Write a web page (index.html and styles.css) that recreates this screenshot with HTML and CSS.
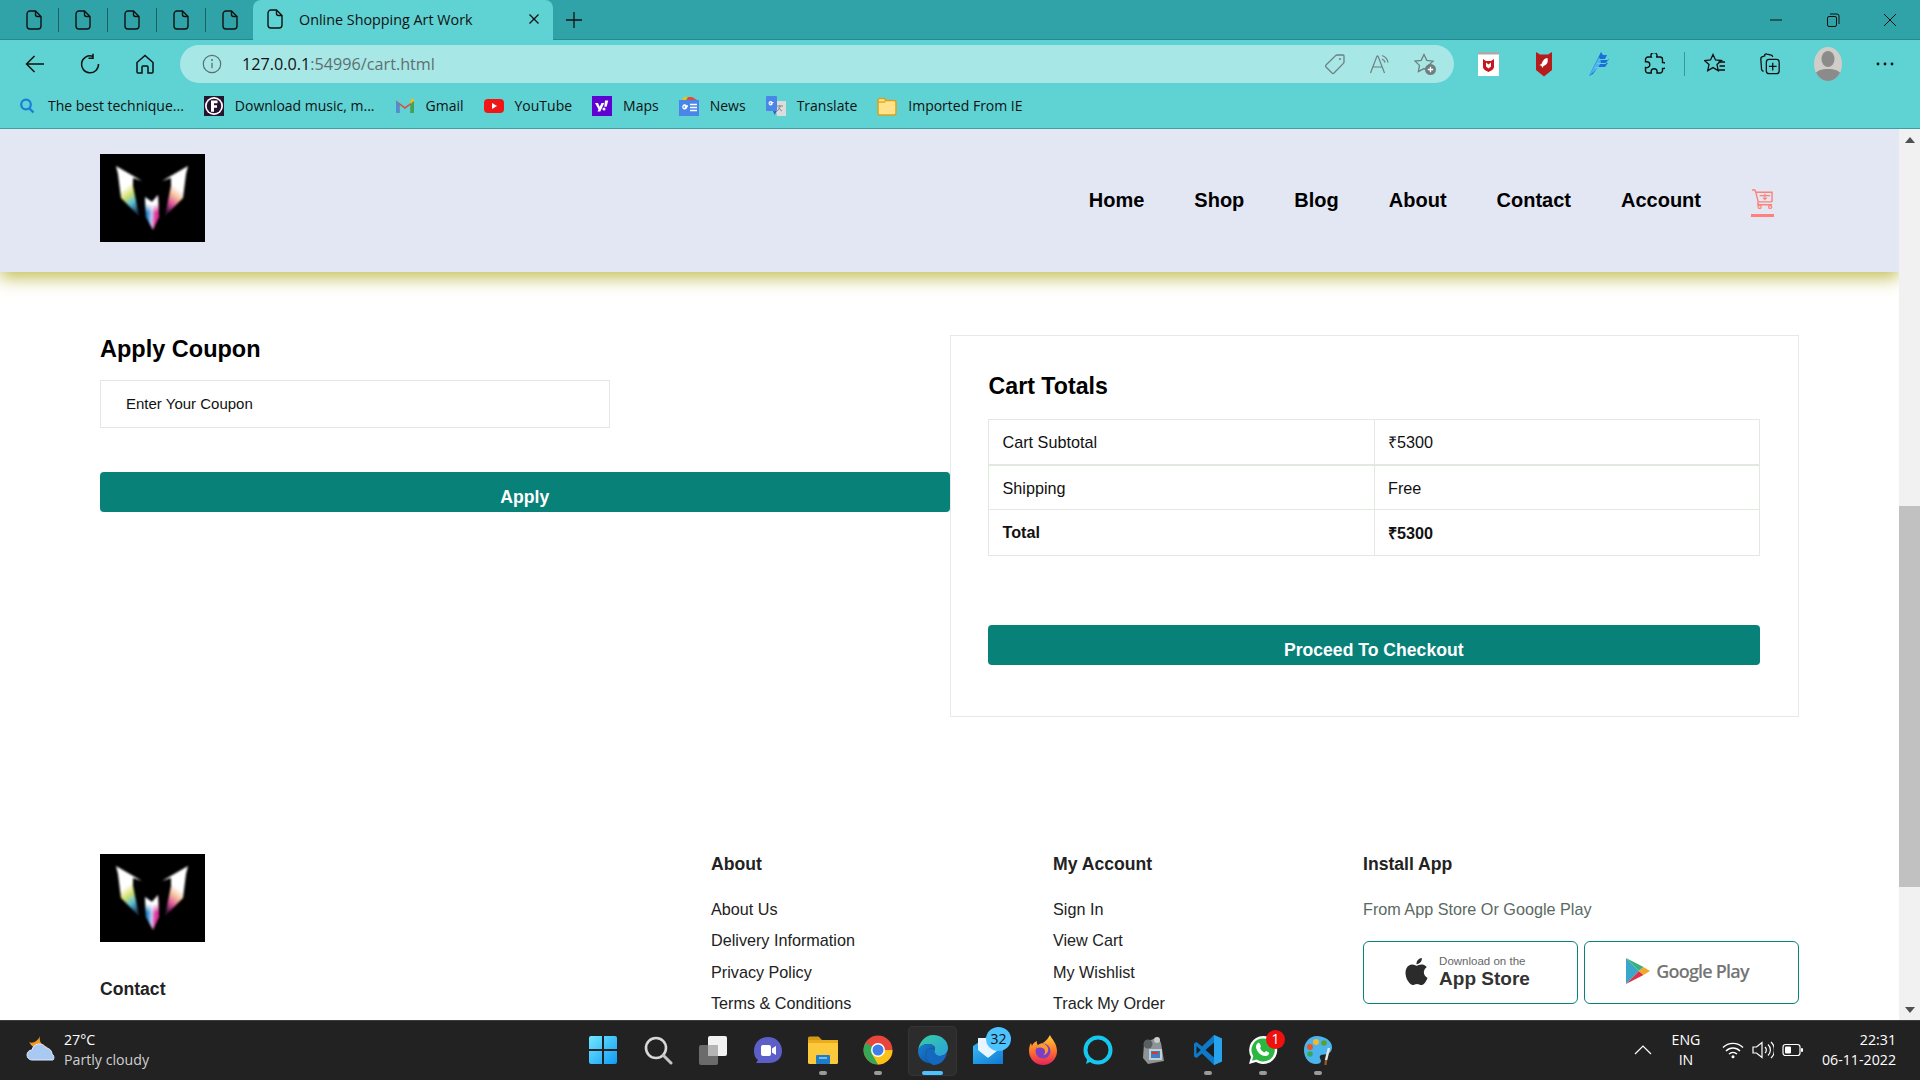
FILE: index.html
```html
<!DOCTYPE html>
<html lang="en">
<head>
<meta charset="utf-8">
<title>Online Shopping Art Work</title>
<link rel="stylesheet" href="styles.css">
</head>
<body>
<svg class="sprite" aria-hidden="true">
  <defs>
    <linearGradient id="wl" x1="0.2" y1="0" x2="0.6" y2="1"><stop offset="0.42" stop-color="#fff"/><stop offset="0.6" stop-color="#d6e06a"/><stop offset="0.78" stop-color="#5ac0d8"/><stop offset="1" stop-color="#1f3a5a"/></linearGradient>
    <linearGradient id="wr" x1="0.8" y1="0" x2="0.4" y2="1"><stop offset="0.45" stop-color="#fff"/><stop offset="0.62" stop-color="#f5c09a"/><stop offset="0.8" stop-color="#e0559a"/><stop offset="1" stop-color="#3a1440"/></linearGradient>
    <linearGradient id="wc" x1="0" y1="0" x2="1" y2="0.1"><stop offset="0.3" stop-color="#2f8fd6"/><stop offset="0.52" stop-color="#c8d0f4"/><stop offset="0.78" stop-color="#e2349a"/></linearGradient>
    <linearGradient id="wc2" x1="0" y1="0" x2="0" y2="1"><stop offset="0.25" stop-color="#fff"/><stop offset="0.5" stop-color="#fff" stop-opacity="0"/></linearGradient>
    <filter id="soft"><feGaussianBlur stdDeviation="0.9"/></filter>
    <linearGradient id="win" x1="0" y1="0" x2="1" y2="1"><stop offset="0" stop-color="#72e8ff"/><stop offset="1" stop-color="#0f9bf5"/></linearGradient>
    <linearGradient id="edge1" x1="0" y1="0" x2="1" y2="1"><stop offset="0" stop-color="#37cfa0"/><stop offset="1" stop-color="#2a9fe0"/></linearGradient>
    <linearGradient id="edge2" x1="0" y1="0" x2="1" y2="1"><stop offset="0" stop-color="#1a82d6"/><stop offset="1" stop-color="#0c4f9e"/></linearGradient>
    <linearGradient id="fx" x1="0" y1="0" x2="0" y2="1"><stop offset="0" stop-color="#ffcf3a"/><stop offset="0.5" stop-color="#ff7a2a"/><stop offset="1" stop-color="#e6205c"/></linearGradient>
    <linearGradient id="mail" x1="0" y1="0" x2="1" y2="1"><stop offset="0" stop-color="#35b8f2"/><stop offset="1" stop-color="#0f78d4"/></linearGradient>
    <symbol id="logo" viewBox="0 0 105 88">
      <rect width="105" height="88" fill="#000"/>
      <g filter="url(#soft)">
        <path d="M16 12 42 27 33 24 33 32 39 62 21 44 18 20Z" fill="url(#wl)"/>
        <path d="M88 12 62 27 71 24 71 32 65 62 83 44 86 20Z" fill="url(#wr)"/>
        <path d="M45 43 52 48 58 41 59 63 53 76 46 63Z" fill="url(#wc)"/>
        <path d="M45 43 52 48 58 41 59 63 53 76 46 63Z" fill="url(#wc2)"/>
      </g>
    </symbol>
    <symbol id="doc" viewBox="0 0 16 20">
      <path d="M4 1h5.500L15 6.500V16a3 3 0 0 1-3 3H4a3 3 0 0 1-3-3V4a3 3 0 0 1 3-3Z M9.500 1v3.500a2 2 0 0 0 2 2H15" fill="none" stroke="#111" stroke-width="1.400"/>
    </symbol>
  </defs>
</svg>

<div class="browser">
  <div class="tabstrip">
    <div class="pin"><svg class="ic-doc"><use href="#doc"/></svg></div>
    <div class="pin"><svg class="ic-doc"><use href="#doc"/></svg></div>
    <div class="pin"><svg class="ic-doc"><use href="#doc"/></svg></div>
    <div class="pin"><svg class="ic-doc"><use href="#doc"/></svg></div>
    <div class="pin pin-last"><svg class="ic-doc"><use href="#doc"/></svg></div>
    <div class="tab">
      <svg class="ic-doc"><use href="#doc"/></svg>
      <span class="tab-title">Online Shopping Art Work</span>
      <svg class="tab-x" viewBox="0 0 12 12"><path d="M1.500 1.500l9 9M10.500 1.500l-9 9" stroke="#111" stroke-width="1.300"/></svg>
    </div>
    <svg class="tab-plus" viewBox="0 0 18 18"><path d="M9 1v16M1 9h16" stroke="#111" stroke-width="1.300"/></svg>
    <div class="winctl">
      <svg viewBox="0 0 14 14"><path d="M1 7h12" stroke="#111" stroke-width="1"/></svg>
      <svg viewBox="0 0 14 14"><path d="M1.500 5a1.500 1.500 0 0 1 1.500-1.500h6A1.500 1.500 0 0 1 10.500 5v7a1.500 1.500 0 0 1-1.500 1.500H3A1.500 1.500 0 0 1 1.500 12Z M4 1h7a2 2 0 0 1 2 2v8" fill="none" stroke="#111" stroke-width="1"/></svg>
      <svg viewBox="0 0 14 14"><path d="M1 1l12 12M13 1 1 13" stroke="#111" stroke-width="1"/></svg>
    </div>
  </div>

  <div class="toolbar">
    <div class="tool"><svg class="i22" viewBox="0 0 22 22"><path d="M20 11H2.500M10.500 3l-8 8 8 8" fill="none" stroke="#111" stroke-width="1.500"/></svg></div>
    <div class="tool"><svg class="i22" viewBox="0 0 22 22"><path d="M13.500 3.200A8.500 8.500 0 1 0 19.500 11M14 .8v4.500H9.500" fill="none" stroke="#111" stroke-width="1.500"/></svg></div>
    <div class="tool"><svg class="i22" viewBox="0 0 22 22"><path d="M3 9.500 11 2.500l8 7V19a1 1 0 0 1-1 1h-4v-6a1 1 0 0 0-1-1H9a1 1 0 0 0-1 1v6H4a1 1 0 0 1-1-1Z" fill="none" stroke="#111" stroke-width="1.500"/></svg></div>
    <div class="addr">
      <svg class="i20" viewBox="0 0 20 20"><circle cx="10" cy="10" r="8.700" fill="none" stroke="#5b6f70" stroke-width="1.200"/><path d="M10 8.800v5.500" stroke="#5b6f70" stroke-width="1.300"/><circle cx="10" cy="6" r="1" fill="#5b6f70"/></svg>
      <span class="url"><span class="url-host">127.0.0.1</span>:54996/cart.html</span>
      <div class="addr-tools">
        <div class="atool"><svg class="i22" viewBox="0 0 22 22"><path d="M13 2h6a1 1 0 0 1 1 1v6a2 2 0 0 1-.6 1.400L10 20a1.500 1.500 0 0 1-2 0L2 14a1.500 1.500 0 0 1 0-2l9.600-9.400A2 2 0 0 1 13 2Z" fill="none" stroke="#6e7f80" stroke-width="1.300"/><circle cx="16" cy="6" r="1" fill="#6e7f80"/></svg></div>
        <div class="atool"><svg class="i22" viewBox="0 0 22 22"><path d="M1.500 20 8 3h1l6.500 17M4 14h9.500" fill="none" stroke="#6e7f80" stroke-width="1.200"/><path d="M13 2.500a9 9 0 0 1 6 7M13 6a5 5 0 0 1 3 3.500" fill="none" stroke="#6e7f80" stroke-width="1.200"/></svg></div>
        <div class="atool"><svg class="i22" viewBox="0 0 22 22"><path d="M10 1.500 12.800 7.300l6.200.8-4.500 4.300 1.100 6.200L10 15.600l-5.600 3 1.100-6.200L1 8.100l6.200-.8Z" fill="none" stroke="#6e7f80" stroke-width="1.300"/><circle cx="16.500" cy="16.500" r="5.500" fill="#6e7f80"/><path d="M16.500 13.800v5.400M13.800 16.500h5.400" stroke="#fff" stroke-width="1.300"/></svg></div>
      </div>
    </div>
    <div class="tool tool-first"><svg class="i-tall" viewBox="0 0 22 26"><rect y="1" width="21" height="24" fill="#fff"/><rect y="1" width="21" height="2.500" fill="#aaa"/><path d="M5 8l3 2h5l3-2v8c0 2-3 4-5.500 5C8 20 5 18 5 16Z" fill="#c8161d"/><path d="M8 11.500v4l2.500 2 2.500-2v-4l-2.500 2Z" fill="#fff"/></svg></div>
    <div class="tool"><svg class="i-tall" viewBox="0 0 22 26"><path d="M3 1l4 2.500h8L19 1v18l-8 6.500L3 19Z" fill="#b71c1c"/><path d="M14.500 7c-3 0-5 3-6 6l-2 1 2 1 1 2 1-2c3-1 5-3 4-8Z" fill="#fff"/></svg></div>
    <div class="tool"><svg class="i-tall" viewBox="0 0 22 26"><path d="M1 25 13 1l2 3h4l-2 4h4l-3 4h2l-3 4h-7l-5 7Z" fill="#1b6fd8"/><path d="M1 25 11 6l2 5-3 6Z" fill="#4fb2ee"/><path d="M11 8.500h9M9 12.500h9M7 16.500h9" stroke="#5fd2d3" stroke-width="1"/></svg></div>
    <div class="tool"><svg class="i22" viewBox="0 0 22 22"><path d="M8 3.500a3 3 0 0 1 6 0c0 .8-.3 1.200-.3 1.500h3.300a2.500 2.500 0 0 1 2.500 2.500v3.100c.4 0 .5-.1.700-.1a3 3 0 0 1 0 6c-.2 0-.3-.1-.7-.1v2.100a2.500 2.500 0 0 1-2.500 2.500h-3.100c0-.5.2-.8.2-1.200a3 3 0 0 0-6 0c0 .4.2.7.2 1.200H5a2.500 2.500 0 0 1-2.500-2.500v-3c.5 0 .9.2 1.300.2a3 3 0 0 0 0-6c-.4 0-.8.2-1.300.2V7.500A2.500 2.500 0 0 1 5 5h3.300C8.200 4.700 8 4.200 8 3.500Z" fill="none" stroke="#111" stroke-width="1.400" transform="translate(0 -1)"/></svg></div>
    <div class="sep"></div>
    <div class="tool"><svg class="i22" viewBox="0 0 22 22"><path d="M9 1.500 11.500 7l6 .6-4.500 4 1.300 6-5.300-3-5.300 3 1.300-6L.5 7.600l6-.6Z" fill="none" stroke="#111" stroke-width="1.300"/><path d="M14.500 9H21M15.500 13H21M14.500 17H21" stroke="#111" stroke-width="1.300"/></svg></div>
    <div class="tool"><svg class="i22" viewBox="0 0 22 24"><path d="M5 2.500a2 2 0 0 1 2.500-1.400l5 1.300a2 2 0 0 1 1.400 2M4 20a3 3 0 0 1-2.200-2L1 7a3 3 0 0 1 2.500-3.300L6 3" fill="none" stroke="#111" stroke-width="1.400"/><rect x="7" y="7" width="14" height="15.500" rx="3" fill="none" stroke="#111" stroke-width="1.400"/><path d="M14 10.500v8.500M9.800 14.700h8.400" stroke="#111" stroke-width="1.400"/></svg></div>
    <div class="tool tool-wide"><div class="avatar"><svg viewBox="0 0 28 34"><ellipse cx="14" cy="12" rx="6.500" ry="8" fill="#8b8b8b"/><path d="M0 34V29c2-6 8-7 14-7s12 1 14 7v5Z" fill="#8b8b8b"/></svg></div></div>
    <div class="tool"><svg class="i22" viewBox="0 0 22 22"><circle cx="4" cy="11" r="1.400" fill="#111"/><circle cx="11" cy="11" r="1.400" fill="#111"/><circle cx="18" cy="11" r="1.400" fill="#111"/></svg></div>
  </div>

  <div class="bookmarks">
    <div class="bm"><svg class="i20" viewBox="0 0 20 20"><circle cx="9" cy="8.500" r="4.800" fill="none" stroke="#1a7fd4" stroke-width="2.200"/><path d="M12.500 12.500l4 4" stroke="#1a7fd4" stroke-width="2.400"/></svg><span>The best technique...</span></div>
    <div class="bm"><svg class="i20" viewBox="0 0 20 20"><rect width="20" height="20" fill="#241430"/><circle cx="10" cy="10" r="9" fill="#fff"/><circle cx="10" cy="10" r="7.300" fill="#241430"/><path d="M7 4.500h6.500v2.700H10v2h3v2.600h-3v4H7Z" fill="#fff"/></svg><span>Download music, m...</span></div>
    <div class="bm"><svg class="i20" viewBox="0 0 20 20"><path d="M1 4.500 10 11l9-6.500V16a1 1 0 0 1-1 1h-2.500V8.800L10 13 4.500 8.800V17H2a1 1 0 0 1-1-1Z" fill="#e8453c"/><path d="M1 5v11a1 1 0 0 0 1 1h2.500V8Z" fill="#4a90d9"/><path d="M15.500 8v9H18a1 1 0 0 0 1-1V5Z" fill="#3aa757"/><path d="M19 5V4.500A1.500 1.500 0 0 0 16.800 3L15.500 4v4Z" fill="#f9bc15"/></svg><span>Gmail</span></div>
    <div class="bm"><svg class="i20" viewBox="0 0 20 20"><rect y="3" width="20" height="14" rx="4" fill="#f01616"/><path d="M8 7l5 3-5 3Z" fill="#fff"/></svg><span>YouTube</span></div>
    <div class="bm"><svg class="i20" viewBox="0 0 20 20"><rect width="20" height="20" fill="#5f01d1"/><path d="M3 7h3l1.700 3.800L9.500 7h2.800l-4 8.500H5.500l1-2.200ZM13 4.500h3.300l-1.700 6.200h-2.300Z M12 11.500a1.500 1.500 0 1 1 0 3 1.500 1.500 0 0 1 0-3Z" fill="#fff"/></svg><span>Maps</span></div>
    <div class="bm"><svg class="i20" viewBox="0 0 20 20"><path d="M3 4l5-3h5v3Z" fill="#3aa757"/><path d="M8 1h5l5 3H9Z" fill="#e8453c"/><path d="M3 4 5 1h4L7 4Z" fill="#f9bc15"/><rect y="4" width="20" height="16" fill="#4a86e8"/><path d="M9 10H6.300v1.500h1.200a1.900 1.900 0 1 1-.5-2M11 8.500h7M11 11.500h7M11 14.500h7" fill="none" stroke="#fff" stroke-width="1.300"/></svg><span>News</span></div>
    <div class="bm"><svg class="i20" viewBox="0 0 20 20"><path d="M8 5h12v15H11Z" fill="#dcdcdc"/><rect width="11" height="15" rx="1" fill="#4a86e8"/><path d="M7.500 6.500H5.200v1.300h1a1.600 1.600 0 1 1-.4-1.700" fill="none" stroke="#fff" stroke-width="1.100"/><path d="M11 15l-2.500 4L7 15Z" fill="#3b5fc4"/><path d="M11 10h6M14 9v1c0 2-1.500 4-3 5M12.500 11.500c.8 1.500 2 2.700 3.500 3.500" fill="none" stroke="#888" stroke-width="1"/></svg><span>Translate</span></div>
    <div class="bm"><svg class="i20" viewBox="0 0 20 20"><path d="M1 4.500A2 2 0 0 1 3 2.500h3.500A2 2 0 0 1 8.500 4.500h8.500A2 2 0 0 1 19 6.500V17a2 2 0 0 1-2 2H3a2 2 0 0 1-2-2Z" fill="#ffe28a" stroke="#d9a21b" stroke-width="1.500"/><path d="M1 6h7.500" stroke="#d9a21b" stroke-width="1.200"/></svg><span>Imported From IE</span></div>
  </div>
</div>

<div class="viewport">
  <div class="page">
    <header class="site-header">
      <svg class="logo"><use href="#logo"/></svg>
      <nav class="nav">
        <a class="nav-link">Home</a>
        <a class="nav-link">Shop</a>
        <a class="nav-link">Blog</a>
        <a class="nav-link">About</a>
        <a class="nav-link">Contact</a>
        <a class="nav-link">Account</a>
        <a class="nav-cart">
          <svg viewBox="0 0 24 21"><path d="M1 1h3l1 2.500h17V13l-1 .5H7.500L5 3.500M7.500 13.500l-.5 3h15" fill="none" stroke="#ff8178" stroke-width="1.500"/><path d="M14.500 5v6M12.500 9l2 2 2-2M9 7h11" fill="none" stroke="#ff8178" stroke-width="1.200"/><circle cx="9" cy="18.800" r="1.600" fill="none" stroke="#ff8178" stroke-width="1.300"/><circle cx="20" cy="18.800" r="1.600" fill="none" stroke="#ff8178" stroke-width="1.300"/></svg>
        </a>
      </nav>
    </header>

    <section class="cart-add">
      <div class="coupon">
        <h3 class="coupon-title">Apply Coupon</h3>
        <input class="coupon-input" type="text" placeholder="Enter Your Coupon">
        <button class="btn">Apply</button>
      </div>
      <div class="totals">
        <h3 class="totals-title">Cart Totals</h3>
        <table class="totals-table">
          <tr class="row-first"><td>Cart Subtotal</td><td>₹5300</td></tr>
          <tr><td>Shipping</td><td>Free</td></tr>
          <tr><td><strong>Total</strong></td><td><strong>₹5300</strong></td></tr>
        </table>
        <button class="btn btn-checkout">Proceed To Checkout</button>
      </div>
    </section>

    <footer class="footer">
      <div class="f-col">
        <svg class="logo"><use href="#logo"/></svg>
        <h4 class="f-contact">Contact</h4>
      </div>
      <div class="f-col">
        <h4 class="f-head">About</h4>
        <a class="f-link">About Us</a>
        <a class="f-link">Delivery Information</a>
        <a class="f-link">Privacy Policy</a>
        <a class="f-link">Terms &amp; Conditions</a>
      </div>
      <div class="f-col">
        <h4 class="f-head">My Account</h4>
        <a class="f-link">Sign In</a>
        <a class="f-link">View Cart</a>
        <a class="f-link">My Wishlist</a>
        <a class="f-link">Track My Order</a>
      </div>
      <div class="f-col">
        <h4 class="f-head">Install App</h4>
        <p class="f-note">From App Store Or Google Play</p>
        <div class="stores">
          <div class="store store-apple">
            <svg class="apple" viewBox="0 0 24 24"><path fill="#2b2b2b" d="M12.152 6.896c-.948 0-2.415-1.078-3.960-1.040-2.040.027-3.910 1.183-4.961 3.014-2.117 3.675-.546 9.103 1.519 12.090 1.013 1.454 2.208 3.090 3.792 3.039 1.520-.065 2.090-.987 3.935-.987 1.831 0 2.350.987 3.960.948 1.637-.026 2.676-1.480 3.676-2.948 1.156-1.688 1.636-3.325 1.662-3.415-.039-.013-3.182-1.221-3.220-4.857-.026-3.040 2.480-4.494 2.597-4.559-1.429-2.090-3.623-2.324-4.390-2.376-2-.156-3.675 1.090-4.610 1.090zM15.530 3.830c.843-1.012 1.400-2.427 1.245-3.830-1.207.052-2.662.805-3.532 1.818-.780.896-1.454 2.338-1.273 3.714 1.338.104 2.715-.688 3.559-1.701"/></svg>
            <div class="store-text"><span class="store-small">Download on the</span><span class="store-big">App Store</span></div>
          </div>
          <div class="store">
            <svg class="gplay" viewBox="0 0 24 26"><path d="M0 0 13 13 0 26Z" fill="#39a7c9"/><path d="M0 0 17.500 9 13 13Z" fill="#38b07a"/><path d="M0 26 17.500 17 13 13Z" fill="#d8344a"/><path d="M17.500 9 24 13l-6.500 4L13 13Z" fill="#f4a52b"/></svg>
            <span class="gplay-text">Google Play</span>
          </div>
        </div>
      </div>
    </footer>
  </div>
  <div class="scrollbar">
    <div class="sb-arrow"><svg viewBox="0 0 10 6"><path d="M5 0l5 6H0Z" fill="#505050"/></svg></div>
    <div class="sb-track"><div class="sb-thumb"></div></div>
    <div class="sb-arrow"><svg viewBox="0 0 10 6"><path d="M5 6 0 0h10Z" fill="#505050"/></svg></div>
  </div>
</div>

<div class="taskbar">
  <div class="weather">
    <svg class="weather-ic" viewBox="0 0 32 32"><path d="M14 2c-1 5 1 10 8 11-3 3-9 3-13 1C5 12 4 9 3 8c4 2 9-1 11-6Z" fill="#f39a1e"/><path d="M6 26a5 5 0 0 1 0-10 7.500 7.500 0 0 1 14-2 6 6 0 0 1 6 6 4 4 0 0 1 1 6Z" fill="#a9c9f2" stroke="#dfeaff" stroke-width="1"/></svg>
    <div class="weather-text"><span class="w-temp">27°C</span><span class="w-desc">Partly cloudy</span></div>
  </div>
  <div class="apps">
    <div class="app"><svg class="i30" viewBox="0 0 30 30"><path d="M1 3a2 2 0 0 1 2-2h11v13H1ZM16 1h11a2 2 0 0 1 2 2v11H16ZM1 16h13v13H3a2 2 0 0 1-2-2ZM16 16h13v11a2 2 0 0 1-2 2H16Z" fill="url(#win)"/></svg></div>
    <div class="app"><svg class="i30" viewBox="0 0 30 30"><circle cx="13" cy="13" r="10" fill="none" stroke="#d8d8d8" stroke-width="2.600"/><path d="M20.500 20.500 28 28" stroke="#c4c4c4" stroke-width="3" stroke-linecap="round"/></svg></div>
    <div class="app"><svg class="i30" viewBox="0 0 30 30"><rect x="10" y="1" width="19" height="20" rx="2" fill="#f2f2f2"/><rect x="1" y="10" width="19" height="20" rx="2" fill="#6b6b6b"/><rect x="10" y="10" width="10" height="11" fill="#b4b4b4"/></svg></div>
    <div class="app"><svg class="i30" viewBox="0 0 30 30"><path d="M15 0c8 0 14 6 14 14s-6 12-13 12H3l2-3C2 21 1 18 1 14 1 6 7 0 15 0Z" fill="#5b5fc7" transform="translate(0 2)"/><rect x="8" y="10" width="10" height="11" rx="2" fill="#fff"/><path d="M19 13.500 23 11v9l-4-2.500Z" fill="#fff"/></svg></div>
    <div class="app"><svg class="i30" viewBox="0 0 30 30"><path d="M0 3a1.500 1.500 0 0 1 1.500-1.500h9L14 5H0Z" fill="#d39a12"/><rect y="5" width="30" height="24" rx="1.500" fill="#fcc93d"/><rect y="5" width="30" height="3" fill="#e8ac1e"/><rect x="8" y="20" width="14" height="9" rx="1" fill="#1d7dc8"/><path d="M11 23h8" stroke="#bfe3ff" stroke-width="1.200"/></svg></div>
    <div class="app"><svg class="i30" viewBox="0 0 30 30"><circle cx="15" cy="15" r="14.500" fill="#e8453c"/><path d="M15 15 2.500 22.200A14.500 14.500 0 0 1 2.500 7.800Z" fill="#35a853"/><path d="M15 15 2.500 22.200A14.500 14.500 0 0 0 15 29.500Z" fill="#35a853"/><path d="M15 15h14.500A14.500 14.500 0 0 1 15 29.500L9 19Z" fill="#fbc216"/><circle cx="15" cy="15" r="7" fill="#fff"/><circle cx="15" cy="15" r="5.500" fill="#3f7ee8"/></svg></div>
    <div class="app app-active"><svg class="i30" viewBox="0 0 30 30"><path d="M15 0C24 0 30 6 30 13c0 5-4 8-8 8-3 0-6-1-6-4 0-1.500 1-2 1-3.500C17 11 14 9 10 9c-5 0-9 3-10 7C1 7 7 0 15 0Z" fill="url(#edge1)"/><path d="M0 16c1-4 5-7 10-7 4 0 7 2 7 4.500 0 .5-.5 1-.5 1-2-1.500-6-1.500-7.500 1-2 3 0 10 6 13C7 29 0 24 0 16Z" fill="url(#edge2)"/><path d="M9 15.500c1.500-2.500 5.500-2.500 7.500-1-.5 2 1 6.500 5.500 6.500 3 0 5-1 7-3-1.500 7-7 12-13 12-1 0-1.500 0-1.500-.5-6-3-7.500-10.500-5.500-14Z" fill="#1468bd"/></svg></div>
    <div class="app"><svg class="i30" viewBox="0 0 30 30"><path d="M0 11 15 1l15 10v18H0Z" fill="url(#mail)"/><path d="M5 3h20v15L15 23 5 18Z" fill="#e8f4ff"/><path d="M0 11 15 23 30 11v18H0Z" fill="url(#mail)"/></svg><span class="badge badge-blue">32</span></div>
    <div class="app"><svg class="i30" viewBox="0 0 30 30"><path d="M22 0c1 3 7 8 7 16a14 14 0 0 1-28 0c0-3 .5-6 2-8l1 3c1-3 3-4 5-5-.5 2 0 3 1 4 4-1 9-4 12-10Z" fill="url(#fx)"/><circle cx="15" cy="16" r="7.500" fill="#7a3ec8"/><path d="M8 14c2-2 6-2 8 0 2 2 1 5-1 6 3 0 6-3 5-7-1-3-4-5-7-4.500-2 .3-4 2.500-5 5.500Z" fill="#ff9a2a"/></svg></div>
    <div class="app"><svg class="i30" viewBox="0 0 30 30"><circle cx="15" cy="15" r="12.500" fill="none" stroke="#16c8ef" stroke-width="4"/><path d="M5 21 3 29l8-4Z" fill="#16c8ef"/></svg></div>
    <div class="app"><svg class="i30" viewBox="0 0 30 30"><path d="M6 8 20 2l3 6 3 18-16 3-5-6Z" fill="#8e9396"/><circle cx="10" cy="9" r="4.500" fill="#5a5f62"/><circle cx="19" cy="5" r="3" fill="#c8ccce"/><rect x="11" y="14" width="13" height="11" fill="#c6ced2"/><rect x="13" y="16" width="9" height="7" fill="#3e7fc4"/><rect x="14" y="17" width="6" height="2" fill="#d33"/></svg></div>
    <div class="app"><svg class="i30" viewBox="0 0 30 30"><path d="M21 0 29 3.500v23L21 30 9 18.500 3.500 23 1 21.500V8.500L3.500 7 9 11.500Z" fill="#0f79c9"/><path d="M21 0 29 3.500v23L21 30Z" fill="#27a2ec"/><path d="M21 7.500 12.500 15l8.500 7.500Z" fill="#1a1d20"/><path d="M3.500 11v8l4.200-4Z" fill="#1a1d20"/></svg></div>
    <div class="app"><svg class="i30" viewBox="0 0 30 30"><path d="M15 1a14 14 0 0 0-12 21L1 29l7-2a14 14 0 1 0 7-26Z" fill="#fff"/><path d="M15 3.500a11.500 11.500 0 0 0-9.700 17.700L4 25.700l4.700-1.300A11.500 11.500 0 1 0 15 3.500Z" fill="#2bb741"/><path d="M10 8c1-.5 1.500 0 2 1l1 2.500-1 1.500c1 2 2.500 3.500 4.500 4.500l1.500-1.500 3 1.500c.5 1-.5 3-3 3.500-5 .5-10-5-10-9.500 0-1.500 1-3 2-3.500Z" fill="#fff"/></svg><span class="badge badge-red">1</span></div>
    <div class="app"><svg class="i30" viewBox="0 0 30 30"><path d="M14 1C6 1 1 8 1 15c0 8 5 14 12 14 3 0 5-1 5-3s-2-3-1-5 4-1 7-2c3-1 5-3 5-7C29 6 22 1 14 1Z" fill="#4bb4ec"/><circle cx="13" cy="7" r="3" fill="#f5b82e"/><circle cx="7" cy="12" r="3" fill="#e8552c"/><circle cx="7" cy="19" r="2.800" fill="#3aa757"/><circle cx="21" cy="8" r="2.800" fill="#5aa02c"/><path d="M26 13 23 25" stroke="#e8e8e8" stroke-width="2.400"/><path d="M23 25 22.500 30" stroke="#8a5a2b" stroke-width="2.400"/></svg></div>
  </div>
  <div class="tray">
    <svg class="tray-chev" viewBox="0 0 18 10"><path d="M1 9l8-8 8 8" fill="none" stroke="#fff" stroke-width="1.200"/></svg>
    <div class="lang"><span>ENG</span><span>IN</span></div>
    <div class="tray-icons">
      <svg viewBox="0 0 22 18"><path d="M1 6.500c5.500-5.500 14.500-5.500 20 0M4 10c4-4 10-4 14 0M7 13c2.300-2 5.700-2 8 0" fill="none" stroke="#fff" stroke-width="1.400"/><circle cx="11" cy="15.800" r="1.500" fill="#fff"/></svg>
      <svg viewBox="0 0 22 18"><path d="M1 6h3.500L10 1.500v15L4.500 12H1Z" fill="none" stroke="#fff" stroke-width="1.200"/><path d="M13 6a4 4 0 0 1 0 6M16 3.500a7.500 7.500 0 0 1 0 11M19 1a11 11 0 0 1 0 16" fill="none" stroke="#fff" stroke-width="1.200"/></svg>
      <svg viewBox="0 0 22 18"><rect x="1" y="3.500" width="17" height="11" rx="2.500" fill="none" stroke="#fff" stroke-width="1.200"/><rect x="3" y="5.500" width="6" height="7" rx="1" fill="#fff"/><rect x="19" y="7" width="2" height="4" rx="1" fill="#fff"/></svg>
    </div>
    <div class="clock"><span>22:31</span><span>06-11-2022</span></div>
  </div>
</div>
</body>
</html>
```
FILE: styles.css
```css
* { box-sizing: border-box; }
html, body { margin: 0; height: 100%; }
body {
  display: flex;
  flex-direction: column;
  height: 1080px;
  overflow: hidden;
  font-family: "Liberation Sans", Arial, sans-serif;
  background: #fff;
}
.sprite { width: 0; height: 0; position: absolute; }
svg { display: block; flex: none; }
.i20 { width: 20px; height: 20px; }
.i22 { width: 22px; height: 22px; }
.i-tall { width: 22px; height: 26px; }
.i30 { width: 30px; height: 30px; }

/* Browser chrome */
.browser { flex: none; font-family: "Open Sans", sans-serif; color: #111; }
.tabstrip {
  height: 40px;
  display: flex;
  align-items: center;
  padding-left: 9.5px;
  background: #2fa3a8;
  border-bottom: 1px solid #248a8e;
}
.pin {
  width: 49px;
  height: 39px;
  display: flex;
  align-items: center;
  justify-content: center;
  background: linear-gradient(#1d5f62, #1d5f62) right center / 1px 24px no-repeat;
}
.pin-last { background: none; }
.ic-doc { width: 16px; height: 20px; }
.tab {
  width: 300px;
  height: 40px;
  margin-left: -1.5px;
  margin-bottom: -1px;
  padding: 0 13px 2px 14px;
  display: flex;
  align-items: center;
  background: #5fd2d3;
  border-radius: 8px 8px 0 0;
}
.tab-title { margin-left: 16px; flex: 1; font-size: 14.350px; white-space: nowrap; }
.tab-x { width: 12px; height: 12px; }
.tab-plus { width: 18px; height: 18px; margin-left: 12px; }
.winctl { margin-left: auto; display: flex; width: 173px; }
.winctl svg { width: 14px; height: 14px; margin: 0 21px 0 22px; }

.toolbar {
  height: 48px;
  padding: 5px 0 5px 7.5px;
  display: flex;
  align-items: center;
  background: #5fd2d3;
}
.tool { width: 55px; height: 38px; display: flex; align-items: center; justify-content: center; }
.tool-first { margin-left: 7.5px; }
.tool-wide { width: 60px; }
.sep { width: 1px; height: 24px; margin: 0 2.5px; background: #3e9496; }
.avatar { width: 28px; height: 34px; border-radius: 50%; background: #d0cdc9; overflow: hidden; }
.avatar svg { width: 28px; height: 34px; }
.addr {
  width: 1274px;
  height: 38px;
  margin-left: 7.5px;
  padding: 0 6.5px 0 22px;
  display: flex;
  align-items: center;
  background: #a7e7e5;
  border-radius: 19px;
}
.url { margin-left: 20px; font-size: 16.200px; color: #5f6f70; }
.url-host { color: #111; }
.addr-tools { margin-left: auto; display: flex; }
.atool { width: 45px; display: flex; justify-content: center; }

.bookmarks {
  height: 41px;
  padding: 0 0 5px 17px;
  display: flex;
  align-items: center;
  gap: 20px;
  background: #5fd2d3;
  border-bottom: 1px solid #3c9fa3;
  font-size: 14px;
}
.bm { display: flex; align-items: center; gap: 11px; white-space: nowrap; }

/* Page viewport */
.viewport { flex: 1; min-height: 0; display: flex; }
.page { flex: 1; min-width: 0; overflow: hidden; }
.scrollbar { width: 21px; flex: none; display: flex; flex-direction: column; background: #f1f1f1; }
.sb-arrow { height: 21px; display: flex; align-items: center; justify-content: center; }
.sb-arrow svg { width: 10px; height: 6px; }
.sb-track { flex: 1; min-height: 0; }
.sb-thumb { width: 100%; height: 381px; margin-top: 356px; background: #c1c1c1; }

.site-header {
  height: 143px;
  padding: 25px 100px 0;
  display: flex;
  align-items: flex-start;
  justify-content: space-between;
  background: #e3e6f3;
  box-shadow: 0 6px 16px rgba(190, 185, 70, 0.9);
}
.logo { width: 105px; height: 88px; }
.nav { display: flex; align-items: flex-start; padding-top: 23px; }
.nav-link { padding: 12px 25px; font-size: 20px; font-weight: 700; line-height: 23px; color: #000; }
.nav-cart { margin: 0 25px; padding: 12px 0 0; border-bottom: 3px solid #ff8178; width: 23px; height: 40px; }
.nav-cart svg { width: 23px; height: 20px; }

.cart-add {
  padding: 63px 100px 0;
  display: grid;
  grid-template-columns: 1fr 1fr;
}
.coupon { display: flex; flex-direction: column; align-items: flex-start; }
.coupon-title { margin: 0 0 17px; font-size: 23.500px; line-height: 28px; font-weight: 700; color: #000; }
.coupon-input {
  width: 510px;
  height: 48px;
  padding: 0 25px 2px;
  border: 1px solid #e2e9e1;
  outline: none;
  font-family: "Liberation Sans", sans-serif;
  font-size: 15px;
}
.coupon-input::placeholder { color: #111; opacity: 1; }
.btn {
  width: 100%;
  height: 40px;
  margin-top: 44px;
  padding: 11px 0 0;
  border: 0;
  border-radius: 4px;
  background: #088178;
  color: #fff;
  font-family: "Liberation Sans", sans-serif;
  font-size: 17.600px;
  font-weight: 700;
}
.totals { height: 382px; padding: 0 38px 0 37px; border: 1px solid #e6e9e6; }
.totals-title { margin: 36px 0 19px; padding-left: 1px; font-size: 23.200px; line-height: 28px; font-weight: 700; color: #000; }
.totals-table { width: 100%; border-collapse: collapse; table-layout: fixed; font-size: 16.200px; color: #111; }
.totals-table td { height: 45.200px; padding: 1px 13px 0; border: 1px solid #e2e9e1; }
.totals-table td:first-child { width: 50.100%; padding-left: 14px; }
.row-first td { border-bottom-width: 2px; }
.btn-checkout { margin-top: 69px; }

.footer {
  margin-top: 137px;
  padding: 0 0 0 100px;
  display: grid;
  grid-template-columns: 611px 342px 310px 436px;
  color: #222;
}
.f-col { display: flex; flex-direction: column; align-items: flex-start; }
.f-contact { margin: 35px 0 0; font-size: 17.600px; line-height: 24px; font-weight: 700; }
.f-head { margin: 0 0 25px; font-size: 17.600px; line-height: 21px; font-weight: 700; }
.f-link { font-size: 16.200px; line-height: 19px; margin-bottom: 12.300px; white-space: nowrap; }
.f-note { margin: 0 0 22px; font-size: 16.200px; line-height: 19px; color: #5a6a62; }
.stores { display: flex; gap: 6px; }
.store {
  width: 215px;
  height: 63px;
  padding-bottom: 3px;
  display: flex;
  align-items: center;
  justify-content: center;
  gap: 9px;
  border: 1px solid #088178;
  border-radius: 6px;
}
.store-apple { padding-right: 8px; }
.apple { width: 27px; height: 29px; }
.gplay { width: 24px; height: 26px; margin-left: -8px; }
.store-text { display: flex; flex-direction: column; color: #333; }
.store-small { font-size: 11.500px; line-height: 14px; color: #666; }
.store-big { font-size: 19px; line-height: 21px; font-weight: 700; }
.gplay-text { margin-left: -3px; font-family: "Open Sans", sans-serif; font-size: 18px; font-weight: 600; color: #757575; letter-spacing: -0.8px; }

/* Taskbar */
.taskbar {
  flex: none;
  height: 60px;
  display: grid;
  grid-template-columns: 1fr auto 1fr;
  align-items: center;
  background: #222;
  border-top: 1px solid #3c3c3c;
  color: #fff;
  font-family: "Open Sans", sans-serif;
  font-size: 14.200px;
}
.weather { display: flex; align-items: center; gap: 6px; padding: 0 0 2px 26px; }
.weather-ic { width: 32px; height: 32px; }
.weather-text { display: flex; flex-direction: column; line-height: 20px; }
.w-desc { color: #d0d0d0; }
.apps { display: flex; }
.app {
  position: relative;
  width: 55px;
  height: 50px;
  display: flex;
  align-items: center;
  justify-content: center;
}
.app svg { margin-bottom: 2px; }
.app:nth-child(5)::after, .app:nth-child(6)::after, .app:nth-child(12)::after, .app:nth-child(13)::after, .app:nth-child(14)::after {
  content: "";
  position: absolute;
  left: 23.5px;
  bottom: 1px;
  width: 8px;
  height: 4px;
  border-radius: 2px;
  background: #9a9a9a;
}
.app-active { background: #2c2c2c; border-radius: 5px; box-shadow: inset 0 0 0 1px #353535; width: 49px; margin: 0 3px; }
.app-active::after {
  content: "";
  position: absolute;
  left: 14px;
  bottom: 1px;
  width: 21px;
  height: 4px;
  border-radius: 2px;
  background: #4cc2ff;
}
.badge {
  position: absolute;
  display: flex;
  align-items: center;
  justify-content: center;
  border-radius: 50%;
  line-height: 1;
}
.badge-blue { left: 26px; top: 1px; width: 25px; height: 24px; background: #4cc2ff; color: #111; font-size: 14px; }
.badge-red { left: 31px; top: 4px; width: 19px; height: 19px; background: #f01010; color: #fff; font-size: 14px; }
.tray { display: flex; align-items: center; justify-content: flex-end; padding: 0 24px 2px 0; }
.tray-chev { width: 18px; height: 10px; margin-right: 16px; }
.lang { width: 36px; display: flex; flex-direction: column; align-items: center; line-height: 20px; margin-right: 18px; }
.tray-icons { display: flex; gap: 8px; margin-right: 18px; }
.tray-icons svg { width: 22px; height: 18px; }
.clock { display: flex; flex-direction: column; align-items: flex-end; line-height: 20px; }
```
